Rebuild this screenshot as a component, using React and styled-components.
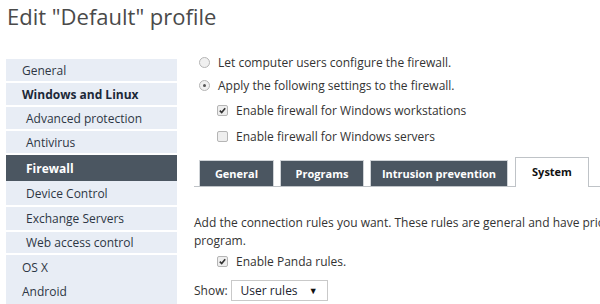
import React from 'react';
import styled, { createGlobalStyle } from 'styled-components';

const Global = createGlobalStyle`
  html, body {
    margin: 0;
    padding: 0;
    background: #fff;
    overflow: hidden;
  }
  body {
    font-family: "Open Sans", "Liberation Sans", sans-serif;
    color: #333;
  }
`;

const Page = styled.div`
  width: 600px;
  height: 304px;
  overflow: hidden;
  padding: 3px 0 0 7px;
  box-sizing: border-box;
`;

const Title = styled.h1`
  margin: 0;
  font-size: 22px;
  font-weight: 400;
  color: #4a4a4a;
  line-height: 26px;
`;

const Body = styled.div`
  display: flex;
  margin-top: 30px;
  margin-left: -1px;
`;

const Side = styled.nav`
  width: 171px;
  flex-shrink: 0;
  display: flex;
  flex-direction: column;
`;

const Item = styled.div`
  height: ${(p) => p.h || 22}px;
  display: flex;
  align-items: center;
  padding-left: ${(p) => (p.sub ? 20 : 16)}px;
  margin-bottom: ${(p) => (p.gap === undefined ? 2 : p.gap)}px;
  font-size: 12px;
  background: ${(p) => (p.active ? '#4b5661' : '#e8edf5')};
  color: ${(p) => (p.active ? '#fff' : p.bold ? '#1c2838' : '#2d3644')};
  font-weight: ${(p) => (p.bold || p.active ? 700 : 400)};
`;

const Main = styled.div`
  flex: 1;
  min-width: 0;
  padding-left: 17px;
  display: flex;
  flex-direction: column;
`;

const Row = styled.label`
  display: flex;
  align-items: center;
  gap: 8px;
  font-size: 12px;
  color: #333;
  height: ${(p) => p.h || 23}px;
  padding-left: ${(p) => p.indent || 5}px;
`;

const Radio = styled.span`
  width: 9px;
  height: 9px;
  border-radius: 50%;
  border: 1px solid #b5b5b5;
  background: #f0f0f0;
  display: flex;
  align-items: center;
  justify-content: center;
  flex-shrink: 0;
  &::after {
    content: '';
    width: 3px;
    height: 3px;
    border-radius: 50%;
    background: ${(p) => (p.on ? '#555' : 'transparent')};
  }
`;

const Box = styled.span`
  width: 9px;
  height: 9px;
  border-radius: 2px;
  border: 1px solid #b5b5b5;
  background: #eee;
  display: flex;
  align-items: center;
  justify-content: center;
  flex-shrink: 0;
`;

const Check = ({ on }) => (
  <Box>
    {on && (
      <svg width="7" height="7" viewBox="0 0 7 7">
        <path d="M0.8 3.6 L2.7 5.6 L6.2 1.2" stroke="#333" strokeWidth="1.6" fill="none" />
      </svg>
    )}
  </Box>
);

const Tabs = styled.div`
  display: flex;
  align-items: flex-end;
  gap: 6px;
  margin-top: 6px;
  padding-left: 5px;
  border-bottom: 1px solid #bfc3c7;
  height: 30px;
`;

const Tab = styled.div`
  width: ${(p) => p.w}px;
  height: ${(p) => (p.active ? 30 : 26)}px;
  box-sizing: border-box;
  border: 1px solid ${(p) => (p.active ? '#bfc3c7' : '#cfd3d7')};
  border-bottom: none;
  margin-bottom: ${(p) => (p.active ? -1 : 0)}px;
  background: ${(p) => (p.active ? '#fff' : '#4b5661')};
  color: ${(p) => (p.active ? '#111' : '#fff')};
  font-size: 11px;
  font-weight: 700;
  display: flex;
  align-items: center;
  justify-content: center;
  padding-bottom: ${(p) => (p.active ? 3 : 0)}px;
  margin-left: ${(p) => (p.active ? 1 : 0)}px;
`;

const Text = styled.p`
  margin: 27px 0 -2px 0;
  font-size: 12px;
  line-height: 18px;
  color: #333;
  white-space: nowrap;
`;

const ShowRow = styled.div`
  display: flex;
  align-items: center;
  gap: 3px;
  margin-top: 6px;
  font-size: 12px;
`;

const Select = styled.div`
  width: 97px;
  height: 21px;
  box-sizing: border-box;
  border: 1px solid #c9c9c9;
  display: flex;
  align-items: center;
  justify-content: space-between;
  padding: 0 9px 0 9px;
  font-size: 12px;
  color: #1c2430;
`;

const Arrow = styled.span`
  font-size: 9px;
  color: #111;
`;

const nav = [
  { t: 'General' },
  { t: 'Windows and Linux', bold: true },
  { t: 'Advanced protection', sub: true },
  { t: 'Antivirus', sub: true },
  { t: 'Firewall', sub: true, active: true, h: 26, gap: 0 },
  { t: 'Device Control', sub: true, h: 24 },
  { t: 'Exchange Servers', sub: true, h: 23 },
  { t: 'Web access control', sub: true, h: 21 },
  { t: 'OS X', h: 24, gap: 0 },
  { t: 'Android', h: 25, gap: 0 },
];

export default function App() {
  return (
    <Page>
      <Global />
      <Title>Edit "Default" profile</Title>
      <Body>
        <Side>
          {nav.map((n) => (
            <Item key={n.t} sub={n.sub} bold={n.bold} active={n.active} h={n.h} gap={n.gap}>
              {n.t}
            </Item>
          ))}
        </Side>
        <Main>
          <Row h={23} style={{ marginTop: -8 }}>
            <Radio />
            Let computer users configure the firewall.
          </Row>
          <Row h={23}>
            <Radio on />
            Apply the following settings to the firewall.
          </Row>
          <Row h={26} indent={23}>
            <Check on />
            Enable firewall for Windows workstations
          </Row>
          <Row h={27} indent={23}>
            <Check />
            Enable firewall for Windows servers
          </Row>
          <Tabs>
            <Tab w={75}>General</Tab>
            <Tab w={84}>Programs</Tab>
            <Tab w={138}>Intrusion prevention</Tab>
            <Tab w={74} active>System</Tab>
          </Tabs>
          <Text>
            Add the connection rules you want. These rules are general and have priority over the ones set for each
            <br />
            program.
          </Text>
          <Row h={26} indent={23}>
            <Check on />
            Enable Panda rules.
          </Row>
          <ShowRow>
            Show:
            <Select>
              User rules
              <Arrow>▼</Arrow>
            </Select>
          </ShowRow>
        </Main>
      </Body>
    </Page>
  );
}
